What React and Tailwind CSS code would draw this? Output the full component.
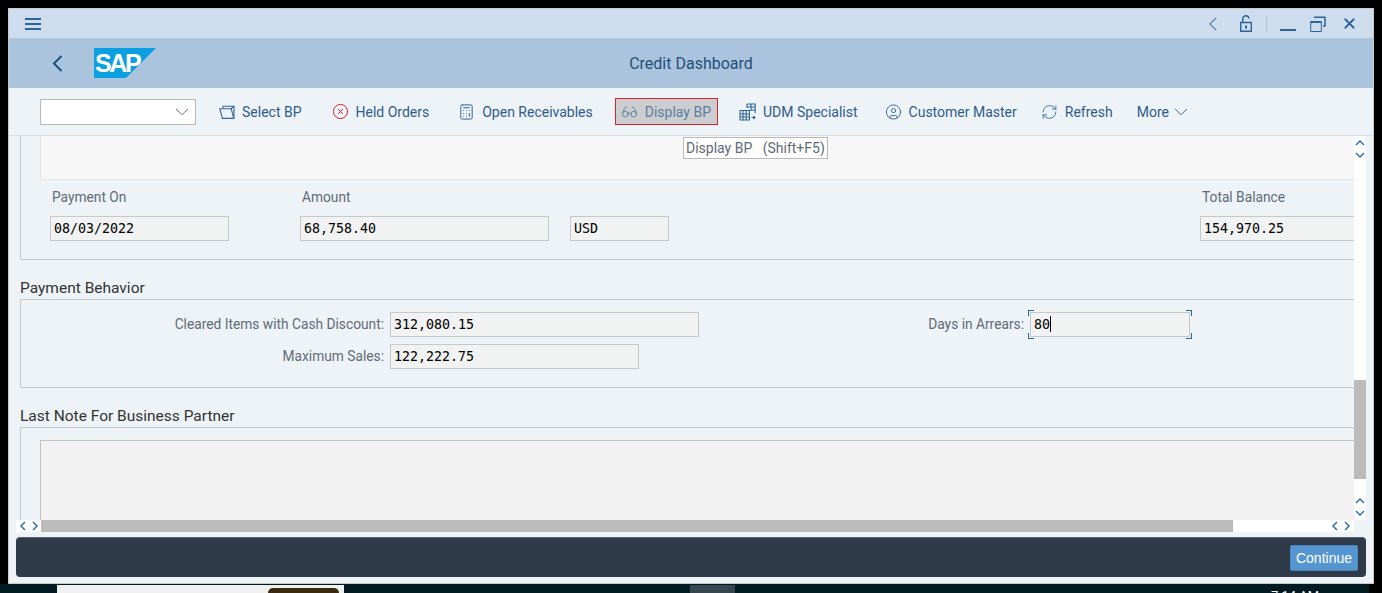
import { ChevronDown, CircleX, Calculator, Glasses, CircleUser, RefreshCw, X } from "lucide-react";

const blue = "#2f6497";

function FolderIcon() {
  return (
    <svg width="16" height="15" viewBox="0 0 16 15" fill="none" stroke={blue} strokeWidth="1.1">
      <path d="M.8 4.8h11.4l2.6 9.6H3.4z" />
      <path d="M4 4V2.2h11v11.5" />
      <path d="M12 4.8l3-2.6" />
    </svg>
  );
}

function UdmIcon() {
  return (
    <svg width="17" height="18" viewBox="0 0 17 18" fill="none" stroke={blue} strokeWidth="1.1">
      <path d="M8 1h8.2v9M8 1v4M12 1v7M8 4h8.2M12 7h4.2" />
      <path d="M1 7.5h9.5v9.5H1zM1 11h9.5M1 14h9.5M4 7.5V17M7.2 7.5V17" />
      <path d="M12.5 14.5H16M14.5 13l1.5 1.5-1.5 1.5" />
    </svg>
  );
}

function Chevron({ dir, className }) {
  const d = {
    up: "M2 8l4-4 4 4",
    down: "M2 4l4 4 4-4",
    left: "M8 2L4 6l4 4",
    right: "M4 2l4 4-4 4",
  }[dir];
  return (
    <svg width="12" height="12" viewBox="0 0 12 12" fill="none" stroke="#2f6fae" strokeWidth="1.5" className={`shrink-0 ${className || ""}`}>
      <path d={d} />
    </svg>
  );
}

function ToolItem({ icon, label, active, className }) {
  return (
    <div
      className={`flex h-[27px] items-center gap-[7px] ${active ? "border border-[#d9232b] bg-[#cbcdd1] pl-[5px] pr-[6px] text-[#5c7d9f]" : "text-[#2f5c8a]"} ${className}`}
    >
      <span className="flex w-[17px] justify-center">{icon}</span>
      <span>{label}</span>
    </div>
  );
}

function Field({ value, className }) {
  return (
    <div
      className={`h-[25px] border border-[#c6c8ca] bg-[#f1f2f2] pl-[3px] font-['DejaVu_Sans_Mono',monospace] text-[13.3px] leading-[23px] text-black ${className}`}
    >
      {value}
    </div>
  );
}

function Corner({ className }) {
  return <span className={`absolute h-[6px] w-[6px] border-[#2f6497] ${className}`} />;
}

export default function App() {
  return (
    <div className="flex h-[593px] flex-col overflow-hidden bg-black pt-2 pl-2 pr-[8px] font-['Roboto','Open_Sans',sans-serif] text-sm">
      <div className="flex h-[576px] shrink-0 flex-col border border-[#c9c9c9] bg-[#eef3f8]">
        {/* title bar */}
        <div className="flex h-[30px] shrink-0 items-center justify-between border-b border-[#b9c6d2] bg-[#cddded] pl-[16px] pr-[17px] text-[#2f6497]">
          <svg width="16" height="12" viewBox="0 0 16 12" fill="none" stroke="#2f6497" strokeWidth="2">
            <path d="M0 1h16M0 6h16M0 11h16" />
          </svg>
          <div className="flex items-center">
            <svg width="8" height="14" viewBox="0 0 8 14" fill="none" stroke="#5f86ab" strokeWidth="1.3">
              <path d="M7 1L1 7l6 6" />
            </svg>
            <svg width="12" height="17" viewBox="0 0 12 17" fill="none" stroke="#2f6497" strokeWidth="1.4" className="ml-[23px]">
              <path d="M.7 7.5h10.6v8.8H.7z" />
              <path d="M2.8 7V3.6C2.8 2 4.2.8 5.8.8s3 1.2 3 2.8" />
              <path d="M6 10.5v3" strokeWidth="2" />
            </svg>
            <div className="ml-[14px] h-[16px] w-px bg-[#b5c4d2]" />
            <div className="ml-[13px] mt-[13px] h-[2px] w-[16px] bg-[#2f6497]" />
            <svg width="16" height="16" viewBox="0 0 16 16" fill="none" stroke="#2f6497" className="ml-[14px]">
              <path d="M.7 5.5h10.6v10H.7z" />
              <path d="M.7 6h10.6" strokeWidth="2" />
              <path d="M4 1.2h11.2M15 1v9h-2" strokeWidth="1.5" />
            </svg>
            <X size={17} strokeWidth={2.5} className="ml-[15px] -mr-[2px]" />
          </div>
        </div>

        {/* header */}
        <div className="relative flex h-[49px] shrink-0 items-center justify-center bg-[#a9c4dc]">
          <svg width="11" height="17" viewBox="0 0 11 17" fill="none" stroke="#1f4e7c" strokeWidth="2" className="absolute left-[43px] top-[16px]">
            <path d="M9.5 1L2 8.5 9.5 16" />
          </svg>
          <svg width="62" height="30" viewBox="0 0 62 30" className="absolute left-[85px] top-[9px]">
            <polygon points="0,0 62,0 32,30 0,30" fill="#0a9fe0" />
            <text x="1" y="24" fill="#fff" fontFamily="Liberation Sans" fontWeight="700" fontSize="25" letterSpacing="-2.4">SAP</text>
          </svg>
          <span className="text-base text-[#234f7b]">Credit Dashboard</span>
        </div>

        {/* toolbar */}
        <div className="flex h-[48px] shrink-0 items-center border-b border-[#d3dfeb] pl-[31px]">
          <div className="flex h-[26px] w-[156px] items-center justify-end border border-[#bbbbbb] bg-white pr-[2px]">
            <ChevronDown size={22} strokeWidth={0.9} className="text-[#2f5c8a]" />
          </div>
          <ToolItem className="ml-[22px]" icon={<FolderIcon />} label="Select BP" />
          <ToolItem className="ml-[30px]" icon={<CircleX size={17} strokeWidth={1.4} className="text-[#d1202a]" />} label="Held Orders" />
          <ToolItem className="ml-[29px]" icon={<Calculator size={18} strokeWidth={1.4} className="text-[#2f6497]" />} label="Open Receivables" />
          <ToolItem className="ml-[22px]" active icon={<Glasses size={18} strokeWidth={1.25} />} label="Display BP" />
          <ToolItem className="ml-[21px]" icon={<UdmIcon />} label="UDM Specialist" />
          <ToolItem className="ml-[27px]" icon={<CircleUser size={18} strokeWidth={1.3} className="text-[#2f6497]" />} label="Customer Master" />
          <ToolItem className="ml-[24px]" icon={<RefreshCw size={18} strokeWidth={1.2} className="text-[#2f6497]" />} label="Refresh" />
          <div className="ml-[24px] flex items-center gap-[1px] text-[#2f5c8a]">
            More <ChevronDown size={22} strokeWidth={1} />
          </div>
        </div>

        {/* scroll region */}
        <div className="relative mx-[7px] flex h-[396px] shrink-0 flex-col">
          <div className="flex min-h-0 flex-1">
            <div className="min-w-0 flex-1 overflow-hidden pl-1 text-[#5f6b76]">
              <div className="h-[124px] border-b border-l border-[#c6c8ca] pl-[19px]">
                <div className="h-[44px] border-b border-l border-[#e4e5e6] bg-[#f7f7f7]" />
                <div className="-ml-[20px] grid w-[1340px] grid-cols-[250px_270px_630px_160px] pl-[30px] pt-[8px]">
                  <span className="pl-[2px] text-[13.75px] leading-[18px]">Payment On</span>
                  <span className="pl-[2px] text-[13.75px] leading-[18px]">Amount</span>
                  <span />
                  <span className="pl-[2px] text-[13.75px] leading-[18px]">Total Balance</span>
                  <Field className="mt-[10px] w-[179px]" value="08/03/2022" />
                  <Field className="mt-[10px] w-[249px]" value="68,758.40" />
                  <Field className="mt-[10px] w-[99px]" value="USD" />
                  <Field className="mt-[10px] w-[160px]" value="154,970.25" />
                </div>
              </div>

              <h2 className="mt-[18px] text-[15.5px] leading-[20px] text-[#333]">Payment Behavior</h2>
              <div className="mt-[1px] h-[89px] border-y border-l border-[#c6c8ca]">
                <div className="flex items-center pt-[12px]">
                  <span className="w-[363px] text-right text-[13.75px]">Cleared Items with Cash Discount:</span>
                  <Field className="ml-[6px] w-[309px]" value="312,080.15" />
                  <span className="w-[325px] text-right text-[13.75px]">Days in Arrears:</span>
                  <div className="relative ml-[6px]">
                    <Field className="w-[160px]" value={<>80<span className="inline-block h-[16px] w-px translate-y-[3px] bg-black" /></>} />
                    <Corner className="-left-[2px] -top-[2px] border-t-[1.5px] border-l-[1.5px]" />
                    <Corner className="-right-[2px] -top-[2px] border-t-[1.5px] border-r-[1.5px]" />
                    <Corner className="-bottom-[2px] -left-[2px] border-b-[1.5px] border-l-[1.5px]" />
                    <Corner className="-bottom-[2px] -right-[2px] border-b-[1.5px] border-r-[1.5px]" />
                  </div>
                </div>
                <div className="flex items-center pt-[7px]">
                  <span className="w-[363px] text-right text-[13.75px]">Maximum Sales:</span>
                  <Field className="ml-[6px] w-[249px]" value="122,222.75" />
                </div>
              </div>

              <h2 className="mt-[18px] text-[15.5px] leading-[20px] text-[#333]">Last Note For Business Partner</h2>
              <div className="mt-[1px] h-[120px] border-t border-l border-[#c6c8ca] pl-[19px] pt-[12px]">
                <div className="h-[120px] border-t border-l border-[#bfc1c3] bg-[#f2f2f2]" />
              </div>
            </div>

            {/* vertical scrollbar */}
            <div className="flex w-[12px] shrink-0 flex-col bg-white">
              <Chevron dir="up" className="mt-[1px]" />
              <Chevron dir="down" />
              <div className="mt-[219px] h-[99px] bg-[#bbbbbb]" />
              <Chevron dir="up" className="mt-[16px]" />
              <Chevron dir="down" />
            </div>
          </div>

          {/* horizontal scrollbar */}
          <div className="flex h-[12px] shrink-0 pr-[12px]">
            <div className="flex w-[25px] items-center justify-center bg-white">
              <Chevron dir="left" />
              <Chevron dir="right" />
            </div>
            <div className="w-[1192px] bg-[#bbbbbb]" />
            <div className="flex flex-1 items-center justify-end bg-white pr-[1px]">
              <Chevron dir="left" />
              <Chevron dir="right" />
            </div>
          </div>

          {/* tooltip */}
          <div className="absolute left-[667px] top-[1px] border border-[#b9b9b9] bg-white px-[2px] text-sm leading-[20px] whitespace-pre text-[#5f6b76]">
            {"Display BP   (Shift+F5)"}
          </div>
        </div>

        {/* footer */}
        <div className="mx-[7px] mt-[5px] flex h-[40px] shrink-0 items-center justify-end rounded-[4px] border-t border-[#5a6672] bg-[#2f3b48] pr-[8px]">
          <div className="flex h-[26px] w-[68px] items-center justify-center rounded-[2px] border border-[#4a86bb] bg-[#5596d0] font-['Liberation_Sans',sans-serif] text-sm text-white">
            Continue
          </div>
        </div>
      </div>

      {/* bit of desktop under the window */}
      <div className="-ml-2 mr-[5px] flex min-h-0 flex-1 overflow-hidden bg-[#001a22] pl-[57px] pt-px">
        <div className="h-[9px] w-[287px] bg-[#f0f0f0] pl-[211px] pt-[3px]">
          <div className="h-[6px] w-[71px] rounded-t-[5px] bg-[#3a2a10]" />
        </div>
        <div className="ml-[346px] h-[9px] w-[45px] bg-[#37474f]" />
        <div className="ml-[536px] mt-[4px] text-[13px] leading-[13px] text-white">7:14 AM</div>
      </div>
    </div>
  );
}
